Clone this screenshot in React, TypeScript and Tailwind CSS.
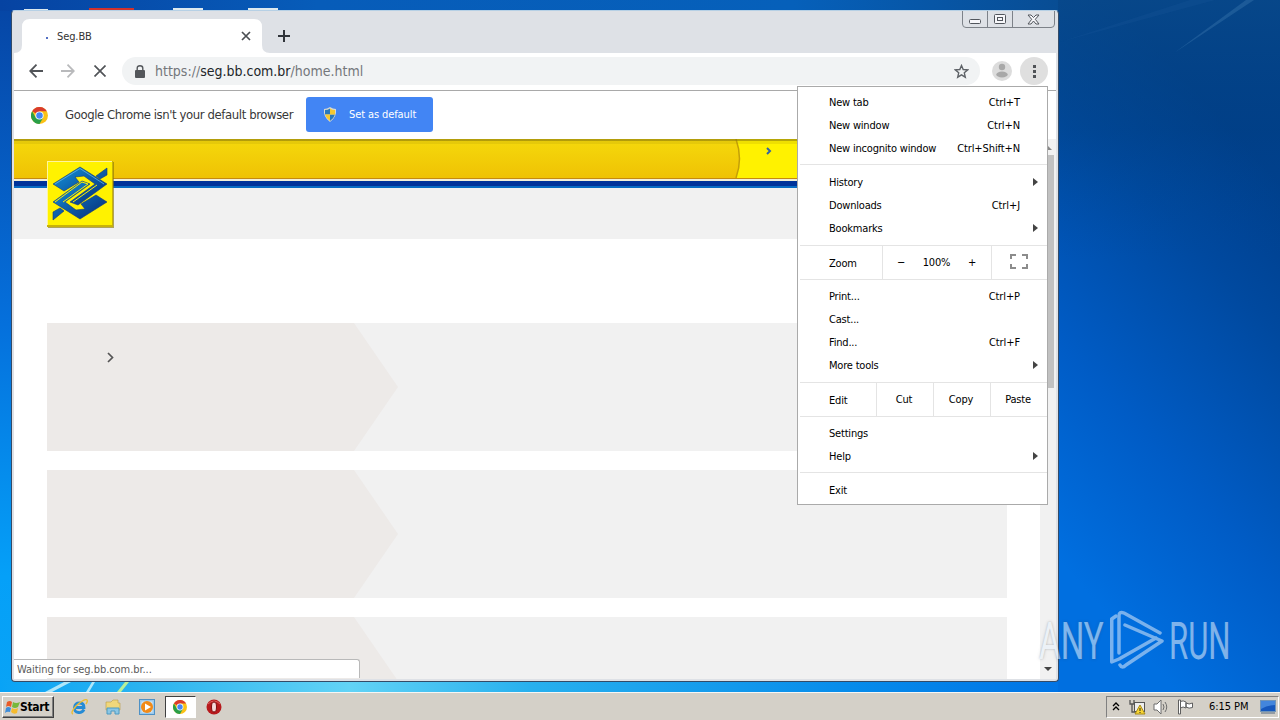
import type { ReactNode } from "react";

interface MenuEntry {
  label: string;
  shortcut?: string;
  submenu?: boolean;
}

const tabItems: MenuEntry[] = [
  { label: "New tab", shortcut: "Ctrl+T" },
  { label: "New window", shortcut: "Ctrl+N" },
  { label: "New incognito window", shortcut: "Ctrl+Shift+N" },
];

const historyItems: MenuEntry[] = [
  { label: "History", submenu: true },
  { label: "Downloads", shortcut: "Ctrl+J" },
  { label: "Bookmarks", submenu: true },
];

const toolItems: MenuEntry[] = [
  { label: "Print...", shortcut: "Ctrl+P" },
  { label: "Cast..." },
  { label: "Find...", shortcut: "Ctrl+F" },
  { label: "More tools", submenu: true },
];

const helpItems: MenuEntry[] = [{ label: "Settings" }, { label: "Help", submenu: true }];

function MenuGroup({ items }: { items: MenuEntry[] }) {
  return (
    <div className="flex shrink-0 flex-col">
      {items.map((item) => (
        <div key={item.label} className="relative flex h-[23px] items-center justify-between pl-[31px] pr-[27px]">
          <span>{item.label}</span>
          {item.shortcut && <span className="tracking-[-0.1px]">{item.shortcut}</span>}
          {item.submenu && (
            <svg className="absolute right-[9px] top-[7px]" width="5" height="8">
              <path d="M0 0L5 4L0 8Z" fill="#444" />
            </svg>
          )}
        </div>
      ))}
    </div>
  );
}

function ChromeMenu() {
  return (
    <div className="absolute left-[797px] top-[86px] flex h-[419px] w-[251px] flex-col border border-[#aaa] bg-white text-[11px] tracking-[-0.2px] text-black">
      <div className="h-[77px] shrink-0 pt-[4px]">
        <MenuGroup items={tabItems} />
      </div>
      <div className="ml-[2px] h-px shrink-0 bg-[#e4e4e4]" />
      <div className="h-[80px] shrink-0 pt-[6px]">
        <MenuGroup items={historyItems} />
      </div>
      <div className="ml-[2px] flex h-[35px] shrink-0 border-y border-[#e4e4e4]">
        <div className="flex w-[83px] items-center border-r border-[#e4e4e4] pl-[29px] pt-px">Zoom</div>
        <div className="flex w-[109px] items-center justify-between border-r border-[#e4e4e4] pl-[14px] pr-[15px]">
          <span>−</span>
          <span>100%</span>
          <span>+</span>
        </div>
        <svg className="ml-[18px] mt-[8px]" width="18" height="15" fill="none" stroke="#8c8c8c" strokeWidth="2">
          <path d="M1 5V1H6M12 1H17V5M17 10V14H12M6 14H1V10" />
        </svg>
      </div>
      <div className="h-[102px] shrink-0 pt-[5px]">
        <MenuGroup items={toolItems} />
      </div>
      <div className="ml-[2px] flex h-[35px] shrink-0 border-y border-[#e4e4e4]">
        <div className="flex w-[77px] items-center border-r border-[#e4e4e4] pl-[29px] pt-px">Edit</div>
        <div className="flex w-[57px] items-center justify-center border-r border-[#e4e4e4] pr-[2px]">Cut</div>
        <div className="flex w-[57px] items-center justify-center border-r border-[#e4e4e4] pr-[2px]">Copy</div>
        <div className="flex w-[54px] items-center justify-center">Paste</div>
      </div>
      <div className="h-[55px] shrink-0 pt-[5px]">
        <MenuGroup items={helpItems} />
      </div>
      <div className="ml-[2px] h-px shrink-0 bg-[#e4e4e4]" />
      <div className="pt-[6px]">
        <MenuGroup items={[{ label: "Exit" }]} />
      </div>
    </div>
  );
}

function ChromeLogo({ size }: { size: number }) {
  return (
    <svg width={size} height={size} viewBox="0 0 24 24">
      <circle cx="12" cy="12" r="12" fill="#fbc116" />
      <path d="M12 12L1.6 6A12 12 0 0 1 22.4 6H12Z" fill="#d93c2d" />
      <path d="M1.6 6A12 12 0 0 0 12 24L17.2 15L12 12L6.8 15Z" fill="#2a9f48" />
      <circle cx="12" cy="12" r="5.8" fill="#fff" />
      <circle cx="12" cy="12" r="4.6" fill="#4687f4" />
    </svg>
  );
}

function Wallpaper() {
  return (
    <svg className="absolute inset-0" width="1280" height="720" preserveAspectRatio="none">
      <defs>
        <linearGradient id="left" x1="0" y1="0" x2="0" y2="1">
          <stop offset="0" stopColor="#0645a4" />
          <stop offset="0.45" stopColor="#0570dc" />
          <stop offset="0.8" stopColor="#05a0f8" />
          <stop offset="1" stopColor="#0aa4f5" />
        </linearGradient>
        <linearGradient id="right" x1="1040" y1="540" x2="1350" y2="260" gradientUnits="userSpaceOnUse">
          <stop offset="0" stopColor="#006fe0" />
          <stop offset="0.35" stopColor="#005cc6" />
          <stop offset="0.75" stopColor="#00499f" />
          <stop offset="1" stopColor="#003f8c" />
        </linearGradient>
        <linearGradient id="topShade" x1="0" y1="0" x2="0" y2="1">
          <stop offset="0" stopColor="#0a4a88" stopOpacity="0.7" />
          <stop offset="0.5" stopColor="#02407f" stopOpacity="0.35" />
          <stop offset="1" stopColor="#004a9d" stopOpacity="0" />
        </linearGradient>
        <linearGradient id="bottom" x1="0" y1="0" x2="1" y2="0">
          <stop offset="0" stopColor="#09a3f6" />
          <stop offset="0.15" stopColor="#2fb5ef" />
          <stop offset="0.33" stopColor="#62d3f6" />
          <stop offset="0.5" stopColor="#28b0ee" />
          <stop offset="0.8" stopColor="#078ceb" />
          <stop offset="1" stopColor="#0074e6" />
        </linearGradient>
        <linearGradient id="top" x1="0" y1="0" x2="1" y2="0">
          <stop offset="0" stopColor="#0643a2" />
          <stop offset="0.3" stopColor="#075cb9" />
          <stop offset="0.75" stopColor="#0660ba" />
          <stop offset="1" stopColor="#084d94" />
        </linearGradient>
      </defs>
      <rect width="700" height="720" fill="url(#left)" />
      <rect x="700" width="580" height="720" fill="url(#right)" />
      <rect x="1050" width="230" height="260" fill="url(#topShade)" />
      <rect width="1058" height="11" fill="url(#top)" />
      <rect y="680" width="1058" height="14" fill="url(#bottom)" />
      <path d="M1174 53L1246 0H1254Z" fill="#3b79b0" opacity="0.4" />
      <path d="M1060 42L1190 0H1215Z" fill="#2766a5" opacity="0.15" />
      <path d="M45 692L64 682H71L52 692ZM86 692L92 682H95L89 692Z" fill="#c9f1fa" opacity="0.85" />
      <path d="M117 692L125 682H129L121 692Z" fill="#b9ef9a" />
      <path d="M24 9H48V10H24ZM173 8H203V10H173ZM248 8H278V10H248Z" fill="#dce9ef" />
      <path d="M89 8H134V10H89Z" fill="#d1322c" />
    </svg>
  );
}

function BankLogo() {
  return (
    <svg className="absolute left-[33px] top-[21px]" width="68" height="69" viewBox="0 0 68 69">
      <defs>
        <linearGradient id="blueRibbon" x1="0" y1="0" x2="1" y2="1">
          <stop offset="0" stopColor="#1598dc" />
          <stop offset="0.5" stopColor="#0c5da9" />
          <stop offset="1" stopColor="#072b74" />
        </linearGradient>
      </defs>
      <rect x="1" y="2" width="66" height="66" fill="#8c7908" opacity="0.65" />
      <rect x="0" y="1" width="66" height="66" fill="#c8b308" />
      <rect x="0" y="1" width="65" height="64" fill="#fff59d" />
      <rect x="1" y="2" width="64" height="63" fill="#fff200" />
      <g fill="url(#blueRibbon)" stroke="#10387c" strokeWidth="0.6">
        <path d="M6 24L33 7L60 24L31 45L23 42L48 24L37 16L28 17L32 22L17 31Z" />
        <path d="M60 42L33 59L6 42L35 21L43 24L18 42L29 50L38 49L34 44L49 35Z" />
        <path d="M49 16L60 8V15L53 19ZM6 52L13 48L17 51L6 60Z" />
      </g>
      <path d="M8 42L35 22L41 24L16 42M50 25L26 42" fill="none" stroke="#fff200" strokeWidth="1" />
      <path d="M8 24L33 8.500L57 24" fill="none" stroke="#63b8e3" strokeWidth="0.8" />
    </svg>
  );
}

function Panel() {
  return (
    <div className="h-[128px] w-[960px] shrink-0 bg-[#f1f1f1]">
      <svg width="352" height="128">
        <path d="M0 0H307L351 64L307 128H0Z" fill="#edeae8" />
      </svg>
    </div>
  );
}

function BankPage() {
  return (
    <div className="flex h-[540px] w-[1042px] overflow-hidden bg-white">
      <div className="relative flex w-[1026px] flex-col">
        <div className="flex h-[40px] shrink-0 border-b border-[#c58a10] bg-linear-to-b from-[#f5d90c] to-[#efc204]">
          <svg width="1026" height="39">
            <path d="M722 0Q729 20 722 39H1026V0Z" fill="#fff200" />
            <path d="M722 0Q729 20 722 39" fill="none" stroke="#c49f08" strokeWidth="1.5" />
            <path d="M753 9L756 12L753 15" fill="none" stroke="#3564a1" strokeWidth="2" />
            <rect width="1026" height="2" fill="#8f7c0a" opacity="0.65" />
            <rect y="2" width="1026" height="3" fill="#b39c08" opacity="0.22" />
          </svg>
        </div>
        <div className="h-[2px] shrink-0 bg-[#f2efd6]" />
        <div className="h-[5px] shrink-0 bg-[#00339a]" />
        <div className="h-[2px] shrink-0 bg-[#086bc4]" />
        <div className="h-[51px] shrink-0 bg-[#f1f1f1]" />
        <div className="mt-[84px] flex flex-col gap-[19px] pl-[33px]">
          <Panel />
          <Panel />
          <Panel />
        </div>
        <svg className="absolute left-[93px] top-[213px]" width="8" height="11" fill="none" stroke="#555" strokeWidth="1.7">
          <path d="M1 1L5.5 5.5L1 10" />
        </svg>
        <BankLogo />
      </div>
      <div className="flex w-[16px] flex-col bg-[#f1f1f1]">
        <svg width="16" height="16">
          <path d="M4 11L8 7L12 11Z" fill="#888" />
        </svg>
        <div className="ml-px h-[233px] w-[13px] bg-[#c1c1c1]" />
        <svg className="mt-auto" width="16" height="18">
          <path d="M4 6H12L8 10Z" fill="#444" />
        </svg>
      </div>
    </div>
  );
}

function BrowserWindow() {
  return (
    <div className="absolute left-[11px] top-[10px] flex h-[672px] w-[1048px] flex-col overflow-hidden rounded-[4px] border border-[#344b67] border-t-[#b6d0e5] bg-[#dee1e6] px-[2px]">
      <div className="relative flex h-[42px] shrink-0 items-end">
        <svg className="absolute bottom-0 left-0" width="256" height="34">
          <path d="M0 34Q8 34 8 26V8Q8 0 16 0H240Q248 0 248 8V26Q248 34 256 34Z" fill="#fff" />
        </svg>
        <div className="relative flex h-[34px] w-[248px] items-center pl-[32px]">
          <span className="mt-[3px] h-[2px] w-[2px] bg-[#536fc3]" />
          <span className="ml-[9px] text-[11px] tracking-[-0.1px] text-[#333]">Seg.BB</span>
          <svg className="ml-auto mr-[11px]" width="10" height="10" stroke="#4b4f53" strokeWidth="1.7">
            <path d="M1 1L9 9M9 1L1 9" />
          </svg>
        </div>
        <svg className="relative mb-[11px] ml-[16px]" width="12" height="12" stroke="#30343a" strokeWidth="2">
          <path d="M6 0V12M0 6H12" />
        </svg>
        <svg className="absolute right-[1px] top-0" width="93" height="17" fill="none" stroke="#7d8289">
          <path d="M0.5 0V13Q0.500 16.500 4 16.500H89Q92.500 16.500 92.500 13V0M25.500 0V16M50.500 0V16" />
          <g stroke="#52565d" fill="#f7f7fa">
            <rect x="7.500" y="8.500" width="11" height="4" rx="1" />
            <rect x="32.500" y="3.500" width="11" height="9" rx="1" />
            <rect x="35.500" y="6.500" width="5" height="3" />
            <path d="M66 4H69L71.500 6.500L74 4H77L73.300 8.300L77 13H74L71.500 10L69 13H66L69.700 8.300Z" />
          </g>
        </svg>
      </div>
      <div className="flex h-[38px] shrink-0 items-center border-b border-[#a9a9a9] bg-white pb-[1px]">
        <svg className="ml-[15px]" width="14" height="14" fill="none" stroke="#515458" strokeWidth="1.8">
          <path d="M14 7H1M7.500 0.700L1.200 7L7.500 13.300" />
        </svg>
        <svg className="ml-[18px]" width="14" height="14" fill="none" stroke="#b9babc" strokeWidth="1.8">
          <path d="M0 7H13M6.500 0.700L12.800 7L6.500 13.300" />
        </svg>
        <svg className="ml-[19px]" width="12" height="12" stroke="#515458" strokeWidth="1.7">
          <path d="M0.500 0.500L11.500 11.500M11.500 0.500L0.500 11.500" />
        </svg>
        <div className="ml-[16px] flex h-[28px] w-[858px] items-center rounded-full bg-[#f1f3f4] pl-[13px] pr-[11px]">
          <svg width="10" height="13">
            <rect y="5" width="10" height="8" rx="1" fill="#54575b" />
            <path d="M2.200 5V3.200Q2.200 0.800 5 0.800T7.800 3.200V5" fill="none" stroke="#54575b" strokeWidth="1.400" />
          </svg>
          <span className="ml-[10px] text-[14px] text-[#74777b]">
            https://<span className="text-[#222529]">seg.bb.com.br</span>/home.html
          </span>
          <svg className="ml-auto" width="15" height="15" viewBox="0 0 15 15" fill="none" stroke="#5f6368" strokeWidth="1.400">
            <path d="M7.500 1.500L9.200 5.500L13.700 5.900L10.300 8.800L11.300 13.200L7.500 10.900L3.700 13.200L4.700 8.800L1.300 5.900L5.800 5.500Z" />
          </svg>
        </div>
        <svg className="ml-[12px]" width="20" height="20">
          <circle cx="10" cy="10" r="10" fill="#dcdcdc" />
          <circle cx="10" cy="6" r="3.200" fill="#a8a8a8" />
          <ellipse cx="10" cy="13.500" rx="5.700" ry="3" fill="#a8a8a8" />
        </svg>
        <svg className="ml-[8px]" width="28" height="28">
          <circle cx="14" cy="14" r="14" fill="#dfdfdf" />
          <path d="M13 8H16V11H13ZM13 13H16V16H13ZM13 18H16V21H13Z" fill="#505357" />
        </svg>
      </div>
      <div className="flex h-[48px] shrink-0 items-center bg-white pb-[2px] pl-[17px]">
        <div className="pt-[2px]">
          <ChromeLogo size={17} />
        </div>
        <span className="ml-[17px] w-[229px] whitespace-nowrap text-[13px] tracking-[-0.41px] text-[#383838]">
          Google Chrome isn't your default browser
        </span>
        <div className="ml-[12px] flex h-[35px] w-[127px] items-center rounded-[3px] bg-[#4285f4] pl-[17px] text-[11px] tracking-[-0.1px] text-white">
          <svg width="14" height="15" viewBox="0 0 14 15">
            <path d="M7 0Q10 2 13 2Q14 10 7 15Q0 10 1 2Q4 2 7 0Z" fill="#d7d9d0" />
            <path d="M7 1.500V7.500H2V3Q5 3 7 1.500ZM7 7.500H12Q11 11 7 14Z" fill="#2878bd" />
            <path d="M7 1.500Q9 3 12 3V7.500H7ZM2 7.500H7V14Q3 11 2 7.500Z" fill="#f5c830" />
          </svg>
          <span className="ml-[12px]">Set as default</span>
        </div>
      </div>
      <BankPage />
      <div className="absolute bottom-[3px] left-[2px] flex h-[19px] w-[346px] items-center rounded-tr-[3px] border-r border-t border-[#b9b9b9] bg-white pl-[3px] text-[11px] tracking-[-0.06px] text-[#5b5b5b]">
        Waiting for seg.bb.com.br...
      </div>
    </div>
  );
}

function Watermark() {
  return (
    <div className="absolute left-[1039px] top-[608px] flex h-[66px] w-[192px] items-center justify-between text-[51px] leading-none text-[#e8f1fb] opacity-55">
      <div className="w-[63px]">
        <span className="inline-block origin-left scale-x-[0.65] font-['Roboto',sans-serif] [text-shadow:0_0_3px_rgba(60,70,80,0.7)]">
          ANY
        </span>
      </div>
      <svg className="shrink-0" width="56" height="66" fill="none" stroke="#dceafa" strokeWidth="3.500" strokeLinejoin="round" strokeLinecap="round">
        <path d="M11 45V8Q11 3 16 5L52 25M17 17L54 33L18 57Q14 61 12 57" />
        <path d="M8 8L3.750 11V54L11 51L48 30" />
      </svg>
      <div className="w-[62px]">
        <span className="inline-block origin-left scale-x-[0.61] font-['Roboto',sans-serif]">RUN</span>
      </div>
    </div>
  );
}

function TaskIcon({ children }: { children: ReactNode }) {
  return <div className="flex h-[22px] w-[33.500px] items-center justify-center">{children}</div>;
}

function Taskbar() {
  return (
    <div className="absolute bottom-0 left-0 flex h-[28px] w-[1280px] items-center border-t border-[#f7f6f4] bg-[#d4d0c8] text-[11px] text-black">
      <div className="ml-[2px] flex h-[22px] w-[52px] items-center border border-b-[#404040] border-l-white border-r-[#404040] border-t-white pl-[2px] shadow-[inset_-1px_-1px_0_#808080]">
        <svg width="15" height="14" viewBox="0 0 15 14">
          <path d="M2 2Q5 0 7 2L6 7Q3 5 1 7Z" fill="#e95b28" />
          <path d="M8 2Q11 4 15 2L13 7Q10 9 7 7Z" fill="#77b83b" />
          <path d="M1 8Q3 6 6 8L5 12Q2 11 0 13Z" fill="#3e8dda" />
          <path d="M7 8Q10 10 13 8L12 13Q9 15 6 12Z" fill="#f6bb2e" />
        </svg>
        <span className="text-[12px] font-bold tracking-[-0.35px]">Start</span>
      </div>
      <div className="ml-[9px] flex items-center">
        <TaskIcon>
          <svg width="17" height="16" viewBox="0 0 17 16" fill="none">
            <path d="M13 10.500Q11 14 7.500 13.500Q3 13 3.500 8.500Q4 4 8.500 4Q13 4 13 8.500H5" stroke="#258bd5" strokeWidth="2.800" />
            <path d="M2 15Q-1 14 5 7Q14 -1 16 1Q17 2 15 5" stroke="#edbd32" strokeWidth="1.400" />
          </svg>
        </TaskIcon>
        <TaskIcon>
          <svg width="16" height="16">
            <path d="M1 3H6L8 1H13V4H15V11H1Z" fill="#f0d77b" stroke="#bb9b44" strokeWidth="0.600" />
            <path d="M2 15V9H14V15H10V12H6V15Z" fill="#8bc6e5" stroke="#4d9ac1" />
          </svg>
        </TaskIcon>
        <TaskIcon>
          <svg width="16" height="16">
            <rect x="0.500" y="0.500" width="15" height="15" fill="#9bc9ec" stroke="#4e91c5" />
            <rect x="2.500" y="2.500" width="11" height="11" fill="#d7eaf6" />
            <circle cx="8" cy="8" r="6" fill="#f18a18" />
            <path d="M6 4.500V11.500L12 8Z" fill="#fff" />
          </svg>
        </TaskIcon>
        <div className="ml-px mr-[2px] flex h-[22px] w-[31px] items-center justify-center border border-b-white border-l-[#404040] border-r-white border-t-[#404040] bg-white">
          <ChromeLogo size={14} />
        </div>
        <TaskIcon>
          <svg width="16" height="16">
            <circle cx="8" cy="8" r="7.500" fill="#b7191c" />
            <path d="M2 5Q8 -1 14 5" fill="none" stroke="#de5e5c" strokeWidth="1" />
            <ellipse cx="8" cy="8" rx="2.500" ry="5" fill="#f5dada" stroke="#7c0d0e" />
          </svg>
        </TaskIcon>
      </div>
      <div className="ml-auto mr-[1px] flex h-[22px] w-[173px] items-center border border-b-white border-l-[#808080] border-r-white border-t-[#808080] pl-[5px]">
        <svg width="8" height="10" fill="none" stroke="#000" strokeWidth="1.300">
          <path d="M1 4L4 1L7 4M1 8L4 5L7 8" />
        </svg>
        <svg className="ml-[9px]" width="17" height="16">
          <rect x="5.500" y="3.500" width="10" height="9" fill="#eee" stroke="#555" />
          <path d="M1 1V5H5V1M3 5V13H8" fill="none" stroke="#555" strokeWidth="1.300" />
          <path d="M11 6L16 15H6Z" fill="#f8d534" stroke="#a78a18" />
          <path d="M10.500 9H11.500V12H10.500ZM10.500 13H11.500V14H10.500Z" fill="#222" />
        </svg>
        <svg className="ml-[7px]" width="17" height="16" fill="none" stroke="#6d6d6d">
          <path d="M1 5H4L8 1V15L4 11H1Z" fill="#fff" />
          <path d="M10 5Q12 8 10 11M12 3Q15.500 8 12 13" />
        </svg>
        <svg className="ml-[7px]" width="17" height="16" fill="#fff" stroke="#5e5e5e">
          <path d="M1.500 1V15H3.500V1ZM3.500 2.500Q6 1 9 3V9Q6 7 3.500 9ZM9 4Q12 6 15.500 4V8.500Q12 10 9 8Z" />
        </svg>
        <span className="ml-[15px] whitespace-nowrap tracking-[-0.05px]">6:15 PM</span>
        <svg className="ml-auto mr-[2px]" width="16" height="14">
          <rect x="0.500" y="0.500" width="15" height="11" fill="#1658bd" stroke="#7195b8" />
          <path d="M1 1H15V5Q7 5 1 9Z" fill="#4386dc" />
          <path d="M1 13H15" stroke="#536980" />
        </svg>
      </div>
    </div>
  );
}

export default function App() {
  return (
    <div className="relative h-[720px] w-[1280px] overflow-hidden bg-[#0064c8] font-['DejaVu_Sans_Condensed','DejaVu_Sans',sans-serif] leading-none">
      <Wallpaper />
      <BrowserWindow />
      <ChromeMenu />
      <Watermark />
      <Taskbar />
    </div>
  );
}
